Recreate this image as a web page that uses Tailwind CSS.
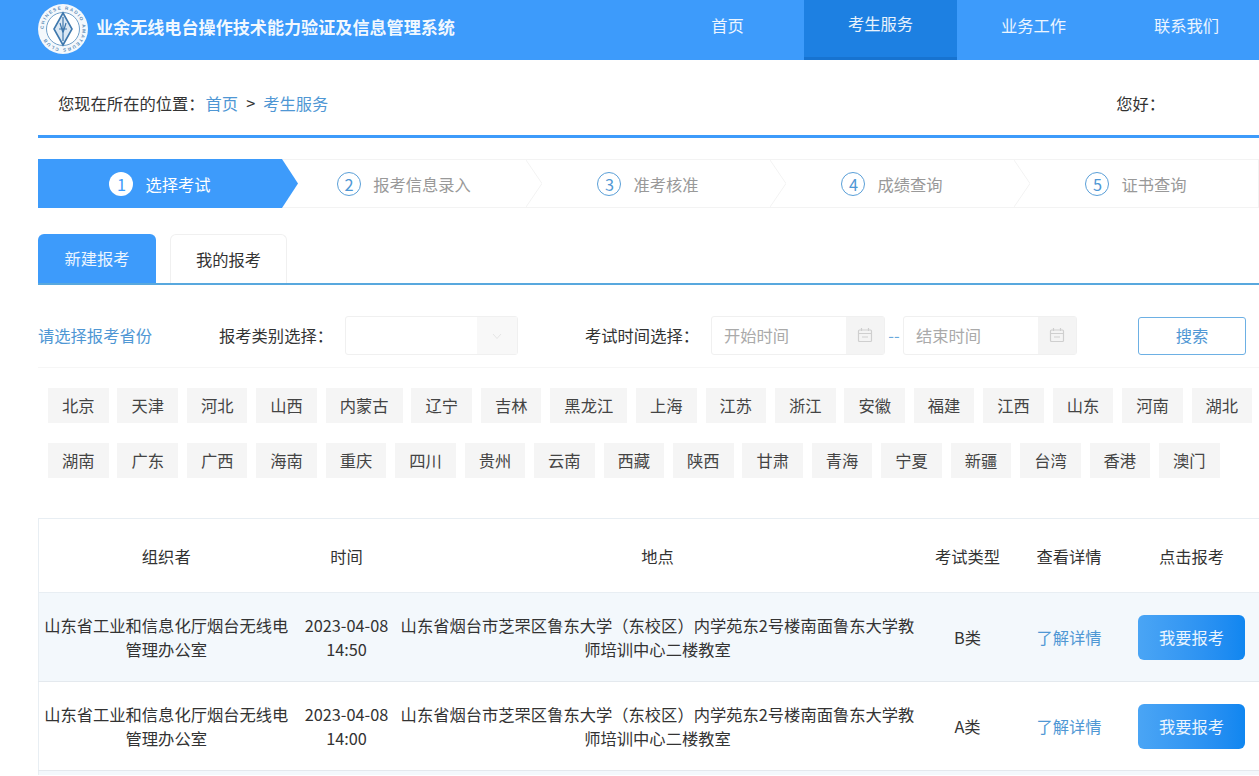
<!DOCTYPE html>
<html lang="zh-CN">
<head>
    <meta charset="UTF-8">
    <title>业余无线电台操作技术能力验证及信息管理系统</title>
    <script src="https://cdn.jsdelivr.net/npm/@tailwindcss/browser@4"></script>
</head>
<body class="h-screen overflow-hidden bg-white text-[#333] text-[16.3px] font-['Noto_Sans_CJK_SC','Noto_Sans',sans-serif]">

    <!-- header -->
    <header class="h-[60px] bg-[#3d9bfb] flex overflow-hidden">
        <div class="w-[651px] shrink-0 flex items-center pl-[38px]">
            <svg class="w-[50px] h-[50px] shrink-0 -mt-[3px]" viewBox="0 0 50 50">
                <circle cx="25" cy="25" r="25" fill="#f4f8fc"/>
                <circle cx="25" cy="25" r="16.5" fill="#fff" stroke="#6f9fc9" stroke-width="1"/>
                <path id="ring" d="M5.5 25a19.5 19.5 0 1 1 39 0a19.5 19.5 0 1 1-39 0" fill="none"/>
                <text font-size="4.6" font-weight="700" fill="#5b8cb8" font-family="Liberation Sans" textLength="112"><textPath href="#ring" textLength="112">CHINESE RADIO AMATEURS CLUB</textPath></text>
                <path d="M25 9L34 25L25 41L16 25Z" fill="#dbe8f4" stroke="#3f78ad" stroke-width="1.6"/>
                <path d="M25 13V37M21 25H29M22 19L25 29L28 19" fill="none" stroke="#3f78ad" stroke-width="1.2"/>
            </svg>
            <span class="ml-2 text-[17.1px] leading-none font-bold text-white/95 whitespace-nowrap -mt-[7px]">业余无线电台操作技术能力验证及信息管理系统</span>
        </div>
        <nav class="flex text-white/90 shrink-0">
            <a class="w-[153px] flex items-center justify-center pb-[10px]">首页</a>
            <a class="w-[153px] flex items-center justify-center pb-[10px] bg-[#1d80e2] border-b-[3px] border-[#1773d0]">考生服务</a>
            <a class="w-[153px] flex items-center justify-center pb-[10px]">业务工作</a>
            <a class="w-[153px] flex items-center justify-center pb-[10px]">联系我们</a>
        </nav>
    </header>

    <div class="pl-[38px]">
        <!-- breadcrumb -->
        <div class="h-[78px] border-b-[3px] border-[#3d9bfb] flex items-center justify-between pl-5 pr-[94px] pt-[11px]">
            <div>您现在所在的位置：<span class="ml-px text-[#4f97d4]">首页</span><span class="mx-2">&gt;</span><span class="text-[#4f97d4]">考生服务</span></div>
            <div>您好：</div>
        </div>

        <!-- steps -->
        <div class="mt-[21px] h-[49px] w-[1221px] flex border-y border-r border-[#f3f3f3] text-[#999]">
            <div class="relative w-[260px] -mr-4 shrink-0 bg-[#3d9bfb] text-white flex items-center justify-center pr-4 pt-px [clip-path:polygon(0_0,244px_0,260px_50%,244px_100%,0_100%)] -my-px z-10">
                <span class="w-6 h-6 rounded-full bg-white text-[#3d9bfb] flex items-center justify-center mr-3">1</span>选择考试
            </div>
            <div class="relative w-[244px] shrink-0 flex items-center justify-center pt-px">
                <span class="w-6 h-6 rounded-full border border-[#5a9fd8] text-[#4f97d4] flex items-center justify-center mr-3">2</span>报考信息录入
                <svg class="absolute -right-4 top-0 w-4 h-full" viewBox="0 0 16 47" preserveAspectRatio="none" fill="none" stroke="#f3f3f3"><path d="M0 0L16 23.5L0 47"/></svg>
            </div>
            <div class="relative w-[244px] shrink-0 flex items-center justify-center pt-px">
                <span class="w-6 h-6 rounded-full border border-[#5a9fd8] text-[#4f97d4] flex items-center justify-center mr-3">3</span>准考核准
                <svg class="absolute -right-4 top-0 w-4 h-full" viewBox="0 0 16 47" preserveAspectRatio="none" fill="none" stroke="#f3f3f3"><path d="M0 0L16 23.5L0 47"/></svg>
            </div>
            <div class="relative w-[244px] shrink-0 flex items-center justify-center pt-px">
                <span class="w-6 h-6 rounded-full border border-[#5a9fd8] text-[#4f97d4] flex items-center justify-center mr-3">4</span>成绩查询
                <svg class="absolute -right-4 top-0 w-4 h-full" viewBox="0 0 16 47" preserveAspectRatio="none" fill="none" stroke="#f3f3f3"><path d="M0 0L16 23.5L0 47"/></svg>
            </div>
            <div class="w-[244px] shrink-0 flex items-center justify-center pt-px">
                <span class="w-6 h-6 rounded-full border border-[#5a9fd8] text-[#4f97d4] flex items-center justify-center mr-3">5</span>证书查询
            </div>
        </div>

        <!-- tabs -->
        <div class="mt-[26px] h-[51px] flex gap-[14px] border-b-2 border-[#58a8de]">
            <div class="w-[118px] bg-[#3d9bfb] text-white/90 rounded-t-md flex items-center justify-center">新建报考</div>
            <div class="w-[117px] border border-b-0 border-[#f0f0f0] rounded-t-md flex items-center justify-center">我的报考</div>
        </div>

        <!-- filters -->
        <div class="mt-[31px] h-[52px] pb-[12px] flex items-center border-b border-[#f6f6f6]">
            <span class="w-[181px] shrink-0 text-[#4f97d4]">请选择报考省份</span>
            <span class="w-[126px] shrink-0 whitespace-nowrap">报考类别选择：</span>
            <div class="w-[173px] h-[39px] shrink-0 flex justify-end border border-[#f0f0f0] rounded-[3px]">
                <div class="w-10 bg-[#f8f8f8] flex items-center justify-center">
                    <svg class="w-3 h-3" viewBox="0 0 12 12" fill="none" stroke="#e6e6e6" stroke-width="1"><path d="M2 4L6 8.5L10 4"/></svg>
                </div>
            </div>
            <span class="ml-[67px] w-[126px] shrink-0 whitespace-nowrap">考试时间选择：</span>
            <div class="w-[174px] h-[39px] shrink-0 flex justify-between border border-[#f0f0f0] rounded-[3px] text-[#aaa]">
                <span class="pl-3 self-center">开始时间</span>
                <div class="w-[38px] bg-[#f4f4f4] flex items-center justify-center">
                    <svg class="w-4 h-4 -mt-0.5" viewBox="0 0 16 16" fill="none" stroke="#cfcfcf" stroke-width="1.2"><rect x="1.5" y="3" width="13" height="11.5" rx="1"/><path d="M1.5 6.5H14.5M4.5 1V4M11.5 1V4M5 10H11"/></svg>
                </div>
            </div>
            <span class="w-[18px] shrink-0 text-center text-[#6aa9dc]">--</span>
            <div class="w-[174px] h-[39px] shrink-0 flex justify-between border border-[#f0f0f0] rounded-[3px] text-[#aaa]">
                <span class="pl-3 self-center">结束时间</span>
                <div class="w-[38px] bg-[#f4f4f4] flex items-center justify-center">
                    <svg class="w-4 h-4 -mt-0.5" viewBox="0 0 16 16" fill="none" stroke="#cfcfcf" stroke-width="1.2"><rect x="1.5" y="3" width="13" height="11.5" rx="1"/><path d="M1.5 6.5H14.5M4.5 1V4M11.5 1V4M5 10H11"/></svg>
                </div>
            </div>
            <button class="ml-[61px] w-[108px] h-[38px] shrink-0 border border-[#6db0e4] rounded-[3px] text-[#4f97d4]">搜索</button>
        </div>

        <!-- provinces -->
        <div class="mt-5 pl-[10px] flex flex-wrap gap-x-[8.86px] gap-y-5 leading-[35px] text-[#444]">
            <span class="px-[14px] bg-[#f5f5f5]">北京</span>
            <span class="px-[14px] bg-[#f5f5f5]">天津</span>
            <span class="px-[14px] bg-[#f5f5f5]">河北</span>
            <span class="px-[14px] bg-[#f5f5f5]">山西</span>
            <span class="px-[14px] bg-[#f5f5f5]">内蒙古</span>
            <span class="px-[14px] bg-[#f5f5f5]">辽宁</span>
            <span class="px-[14px] bg-[#f5f5f5]">吉林</span>
            <span class="px-[14px] bg-[#f5f5f5]">黑龙江</span>
            <span class="px-[14px] bg-[#f5f5f5]">上海</span>
            <span class="px-[14px] bg-[#f5f5f5]">江苏</span>
            <span class="px-[14px] bg-[#f5f5f5]">浙江</span>
            <span class="px-[14px] bg-[#f5f5f5]">安徽</span>
            <span class="px-[14px] bg-[#f5f5f5]">福建</span>
            <span class="px-[14px] bg-[#f5f5f5]">江西</span>
            <span class="px-[14px] bg-[#f5f5f5]">山东</span>
            <span class="px-[14px] bg-[#f5f5f5]">河南</span>
            <span class="px-[14px] bg-[#f5f5f5]">湖北</span>
            <span class="px-[14px] bg-[#f5f5f5]">湖南</span>
            <span class="px-[14px] bg-[#f5f5f5]">广东</span>
            <span class="px-[14px] bg-[#f5f5f5]">广西</span>
            <span class="px-[14px] bg-[#f5f5f5]">海南</span>
            <span class="px-[14px] bg-[#f5f5f5]">重庆</span>
            <span class="px-[14px] bg-[#f5f5f5]">四川</span>
            <span class="px-[14px] bg-[#f5f5f5]">贵州</span>
            <span class="px-[14px] bg-[#f5f5f5]">云南</span>
            <span class="px-[14px] bg-[#f5f5f5]">西藏</span>
            <span class="px-[14px] bg-[#f5f5f5]">陕西</span>
            <span class="px-[14px] bg-[#f5f5f5]">甘肃</span>
            <span class="px-[14px] bg-[#f5f5f5]">青海</span>
            <span class="px-[14px] bg-[#f5f5f5]">宁夏</span>
            <span class="px-[14px] bg-[#f5f5f5]">新疆</span>
            <span class="px-[14px] bg-[#f5f5f5]">台湾</span>
            <span class="px-[14px] bg-[#f5f5f5]">香港</span>
            <span class="px-[14px] bg-[#f5f5f5]">澳门</span>
        </div>

        <!-- exam table -->
        <table class="mt-[40px] w-[1221px] table-fixed border-collapse border border-r-0 border-b-0 border-[#e8eef3] text-center leading-6">
            <colgroup>
                <col class="w-[255px]"><col class="w-[106px]"><col class="w-[518px]"><col class="w-[100px]"><col class="w-[103px]"><col class="w-[139px]">
            </colgroup>
            <tr class="h-[74px] border-b border-[#e8eef3]">
                <td>组织者</td><td>时间</td><td class="pr-0.5">地点</td><td>考试类型</td><td>查看详情</td><td class="pl-[3px]">点击报考</td>
            </tr>
            <tr class="h-[89px] bg-[#f3f8fc] border-b border-[#e4e9ee]">
                <td class="px-1">山东省工业和信息化厅烟台无线电管理办公室</td>
                <td>2023-04-08 14:50</td>
                <td class="pr-0.5">山东省烟台市芝罘区鲁东大学（东校区）内学苑东2号楼南面鲁东大学教师培训中心二楼教室</td>
                <td>B类</td>
                <td class="text-[#4f97d4]">了解详情</td>
                <td class="pl-[3px]"><button class="w-[107px] h-[45px] rounded-md text-white/90 bg-linear-to-r from-[#4aa5f5] to-[#0f86f0]">我要报考</button></td>
            </tr>
            <tr class="h-[89px] border-b border-[#e4e9ee]">
                <td class="px-1">山东省工业和信息化厅烟台无线电管理办公室</td>
                <td>2023-04-08 14:00</td>
                <td class="pr-0.5">山东省烟台市芝罘区鲁东大学（东校区）内学苑东2号楼南面鲁东大学教师培训中心二楼教室</td>
                <td>A类</td>
                <td class="text-[#4f97d4]">了解详情</td>
                <td class="pl-[3px]"><button class="w-[107px] h-[45px] rounded-md text-white/90 bg-linear-to-r from-[#4aa5f5] to-[#0f86f0]">我要报考</button></td>
            </tr>
            <tr class="h-[4px] bg-[#f3f8fc]"><td colspan="6" class="p-0 leading-none text-[0px]"></td></tr>
        </table>
    </div>
</body>
</html>
